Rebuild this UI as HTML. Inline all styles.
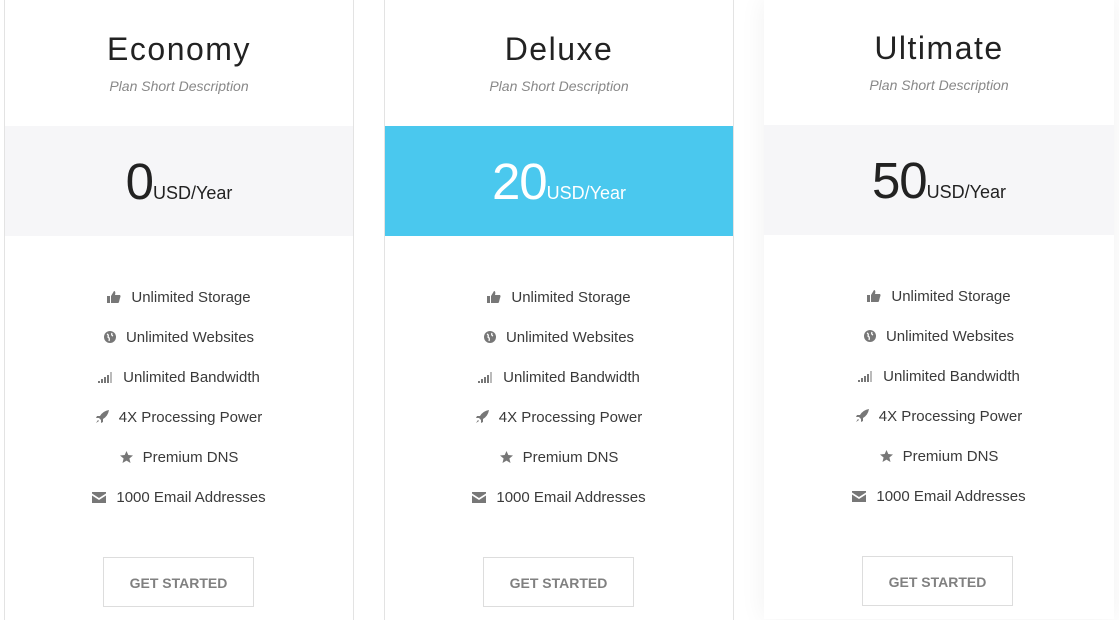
<!DOCTYPE html>
<html><head><style>
*{margin:0;padding:0;box-sizing:border-box}
body{width:1119px;height:613px;background:#fff;font-family:"Liberation Sans",sans-serif;position:relative;overflow:hidden}
.card{position:absolute;top:0;width:350px;height:620px;background:#fff}
.c1{left:4px;border-left:1px solid #e3e3e3;border-right:1px solid #e3e3e3}
.c2{left:384px;border-left:1px solid #e3e3e3;border-right:1px solid #e3e3e3}
.c3{left:764px;width:350px;top:-1px;box-shadow:0 0 25px rgba(0,0,0,0.06)}
.t{position:absolute;top:31px;left:0;right:0;text-align:center;font-size:32px;color:#222;letter-spacing:1.5px}
.d{position:absolute;top:78px;left:0;right:0;text-align:center;font-size:14px;font-style:italic;color:#888}
.p{position:absolute;top:126px;left:0;right:0;height:110px;background:#f6f6f8;text-align:center;color:#222}
.c2 .p{background:#4ac8ee;color:#fff}
.p .n{font-size:51px;line-height:112px;letter-spacing:-1px}
.p .u{font-size:18px}
ul{position:absolute;top:289px;left:0;right:0;list-style:none;text-align:center}
li{height:40px;font-size:15px;color:#3a3a3a}
li svg{vertical-align:-1px;margin-right:10px}
.b{position:absolute;top:557px;left:98px;width:151px;height:50px;border:1px solid #ddd;text-align:center;line-height:50px;font-size:14px;font-weight:bold;color:#808080}
</style></head><body>
<div class="card c1"><div class="t">Economy</div><div class="d">Plan Short Description</div><div class="p"><span class="n">0</span><span class="u">USD/Year</span></div>
<ul>
<li><svg width="14" height="12" viewBox="0 0 14 12"><rect x="0" y="5" width="3" height="7" fill="#777"/><path d="M4 5 L7 0 Q9 0 8 4 L13 4 Q14 5 13 7 L12 11 Q12 12 10 12 L4 12Z" fill="#777"/></svg>Unlimited Storage</li>
<li><svg width="12" height="12" viewBox="0 0 12 12"><circle cx="6" cy="6" r="6" fill="#777"/><path d="M3 3 Q5 4 4 6 Q6 7 5 10 M8 2 Q7 4 9 5" stroke="#fff" stroke-width="1.3" fill="none"/></svg>Unlimited Websites</li>
<li><svg width="15" height="11" viewBox="0 0 15 11"><rect x="0" y="9" width="2" height="2" fill="#777"/><rect x="3" y="7" width="2" height="4" fill="#777"/><rect x="6" y="5" width="2" height="6" fill="#777"/><rect x="9" y="3" width="2" height="8" fill="#777"/><rect x="12" y="0" width="2" height="11" fill="#bbb"/></svg>Unlimited Bandwidth</li>
<li><svg width="13" height="13" viewBox="0 0 13 13"><path d="M13 0 Q7 1 4 6 L1 6 L0 8 L3 8 L5 10 L5 13 L7 12 L7 9 Q12 6 13 0Z M2 10 L0 13 L3 11Z" fill="#777"/></svg>4X Processing Power</li>
<li><svg width="13" height="12" viewBox="0 0 13 12"><path d="M6.5 0 L8.3 4 L13 4.5 L9.4 7.5 L10.5 12 L6.5 9.6 L2.5 12 L3.6 7.5 L0 4.5 L4.7 4Z" fill="#777"/></svg>Premium DNS</li>
<li><svg width="14" height="11" viewBox="0 0 14 11"><path d="M0 0 L14 0 L14 1.5 L7 6 L0 1.5Z M0 3.5 L7 8 L14 3.5 L14 11 L0 11Z" fill="#777"/></svg>1000 Email Addresses</li>
</ul><div class="b">GET STARTED</div></div>

<div class="card c2"><div class="t">Deluxe</div><div class="d">Plan Short Description</div><div class="p"><span class="n">20</span><span class="u">USD/Year</span></div>
<ul>
<li><svg width="14" height="12" viewBox="0 0 14 12"><rect x="0" y="5" width="3" height="7" fill="#777"/><path d="M4 5 L7 0 Q9 0 8 4 L13 4 Q14 5 13 7 L12 11 Q12 12 10 12 L4 12Z" fill="#777"/></svg>Unlimited Storage</li>
<li><svg width="12" height="12" viewBox="0 0 12 12"><circle cx="6" cy="6" r="6" fill="#777"/><path d="M3 3 Q5 4 4 6 Q6 7 5 10 M8 2 Q7 4 9 5" stroke="#fff" stroke-width="1.3" fill="none"/></svg>Unlimited Websites</li>
<li><svg width="15" height="11" viewBox="0 0 15 11"><rect x="0" y="9" width="2" height="2" fill="#777"/><rect x="3" y="7" width="2" height="4" fill="#777"/><rect x="6" y="5" width="2" height="6" fill="#777"/><rect x="9" y="3" width="2" height="8" fill="#777"/><rect x="12" y="0" width="2" height="11" fill="#bbb"/></svg>Unlimited Bandwidth</li>
<li><svg width="13" height="13" viewBox="0 0 13 13"><path d="M13 0 Q7 1 4 6 L1 6 L0 8 L3 8 L5 10 L5 13 L7 12 L7 9 Q12 6 13 0Z M2 10 L0 13 L3 11Z" fill="#777"/></svg>4X Processing Power</li>
<li><svg width="13" height="12" viewBox="0 0 13 12"><path d="M6.5 0 L8.3 4 L13 4.5 L9.4 7.5 L10.5 12 L6.5 9.6 L2.5 12 L3.6 7.5 L0 4.5 L4.7 4Z" fill="#777"/></svg>Premium DNS</li>
<li><svg width="14" height="11" viewBox="0 0 14 11"><path d="M0 0 L14 0 L14 1.5 L7 6 L0 1.5Z M0 3.5 L7 8 L14 3.5 L14 11 L0 11Z" fill="#777"/></svg>1000 Email Addresses</li>
</ul><div class="b">GET STARTED</div></div>

<div class="card c3"><div class="t">Ultimate</div><div class="d">Plan Short Description</div><div class="p"><span class="n">50</span><span class="u">USD/Year</span></div>
<ul>
<li><svg width="14" height="12" viewBox="0 0 14 12"><rect x="0" y="5" width="3" height="7" fill="#777"/><path d="M4 5 L7 0 Q9 0 8 4 L13 4 Q14 5 13 7 L12 11 Q12 12 10 12 L4 12Z" fill="#777"/></svg>Unlimited Storage</li>
<li><svg width="12" height="12" viewBox="0 0 12 12"><circle cx="6" cy="6" r="6" fill="#777"/><path d="M3 3 Q5 4 4 6 Q6 7 5 10 M8 2 Q7 4 9 5" stroke="#fff" stroke-width="1.3" fill="none"/></svg>Unlimited Websites</li>
<li><svg width="15" height="11" viewBox="0 0 15 11"><rect x="0" y="9" width="2" height="2" fill="#777"/><rect x="3" y="7" width="2" height="4" fill="#777"/><rect x="6" y="5" width="2" height="6" fill="#777"/><rect x="9" y="3" width="2" height="8" fill="#777"/><rect x="12" y="0" width="2" height="11" fill="#bbb"/></svg>Unlimited Bandwidth</li>
<li><svg width="13" height="13" viewBox="0 0 13 13"><path d="M13 0 Q7 1 4 6 L1 6 L0 8 L3 8 L5 10 L5 13 L7 12 L7 9 Q12 6 13 0Z M2 10 L0 13 L3 11Z" fill="#777"/></svg>4X Processing Power</li>
<li><svg width="13" height="12" viewBox="0 0 13 12"><path d="M6.5 0 L8.3 4 L13 4.5 L9.4 7.5 L10.5 12 L6.5 9.6 L2.5 12 L3.6 7.5 L0 4.5 L4.7 4Z" fill="#777"/></svg>Premium DNS</li>
<li><svg width="14" height="11" viewBox="0 0 14 11"><path d="M0 0 L14 0 L14 1.5 L7 6 L0 1.5Z M0 3.5 L7 8 L14 3.5 L14 11 L0 11Z" fill="#777"/></svg>1000 Email Addresses</li>
</ul><div class="b">GET STARTED</div></div>
</body></html>
